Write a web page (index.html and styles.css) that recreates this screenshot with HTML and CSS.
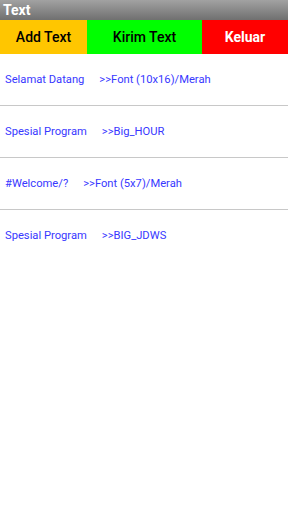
FILE: index.html
```html
<!DOCTYPE html>
<html lang="en">
  <head>
    <meta charset="UTF-8" />
    <meta name="viewport" content="width=device-width, initial-scale=1.0" />
    <title>Text</title>
    <link rel="stylesheet" href="styles.css">
  </head>
  <body>
    <div class="title-bar">Text</div>
    <div class="button-bar">
      <button class="btn btn-add">Add Text</button>
      <button class="btn btn-send">Kirim Text</button>
      <button class="btn btn-exit">Keluar</button>
    </div>
    <ul class="text-list">
      <li><span>Selamat Datang</span><span class="font">&gt;&gt;Font (10x16)/Merah</span></li>
      <li><span>Spesial Program</span><span class="font">&gt;&gt;Big_HOUR</span></li>
      <li><span>#Welcome/?</span><span class="font">&gt;&gt;Font (5x7)/Merah</span></li>
      <li><span>Spesial Program</span><span class="font">&gt;&gt;BIG_JDWS</span></li>
    </ul>
  </body>
</html>
```

FILE: styles.css
```css
body {
  margin: 0;
  background: white;
  font-family: Roboto, "Noto Sans", sans-serif;
}
.title-bar {
  height: 20px;
  line-height: 20px;
  padding-left: 3px;
  background: linear-gradient(#a2a2a2, #707070);
  color: white;
  font-weight: bold;
  font-size: 14px;
}
.button-bar {
  display: flex;
  height: 34px;
}
.btn {
  border: none;
  margin: 0;
  padding: 0;
  font-family: Roboto, "Noto Sans", sans-serif;
  font-size: 14px;
  font-weight: 500;
  color: black;
}
.btn-add {
  width: 87px;
  background: #ffc600;
}
.btn-send {
  width: 115px;
  background: #00ff00;
}
.btn-exit {
  flex: 1;
  background: #ff0000;
  color: white;
  font-weight: bold;
}
.text-list {
  list-style-type: none;
  margin: 0;
  padding: 0;
}
.text-list li {
  display: flex;
  align-items: center;
  height: 51px;
  padding-left: 5px;
  border-bottom: 1px solid #c8c8c8;
  color: #3838ff;
  font-size: 11.2px;
}
.text-list li:last-child {
  border-bottom: none;
}
.text-list .font {
  margin-left: 15px;
}
```
